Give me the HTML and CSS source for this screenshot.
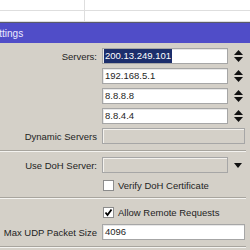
FILE: index.html
```html
<!DOCTYPE html>
<html lang="en">
<head>
  <meta charset="UTF-8">
  <title>DNS Settings</title>
  <link rel="stylesheet" href="styles.css">
</head>
<body>
  <div class="list">
    <div class="cell first"></div><div class="cell"></div>
    <div class="cell first"></div><div class="cell"></div>
  </div>

  <div class="titlebar"><span class="title">Settings</span></div>

  <main class="panel">
    <div class="row">
      <label class="label">Servers:</label>
      <div class="field"><span class="selected">200.13.249.101</span></div>
      <span class="icon"><svg width="9" height="12" viewBox="0 0 9 12"><polygon points="4.5,0 9,5 0,5"/><polygon points="0,7 9,7 4.5,12"/></svg></span>
    </div>
    <div class="row">
      <span class="label"></span>
      <div class="field">192.168.5.1</div>
      <span class="icon"><svg width="9" height="12" viewBox="0 0 9 12"><polygon points="4.5,0 9,5 0,5"/><polygon points="0,7 9,7 4.5,12"/></svg></span>
    </div>
    <div class="row">
      <span class="label"></span>
      <div class="field">8.8.8.8</div>
      <span class="icon"><svg width="9" height="12" viewBox="0 0 9 12"><polygon points="4.5,0 9,5 0,5"/><polygon points="0,7 9,7 4.5,12"/></svg></span>
    </div>
    <div class="row">
      <span class="label"></span>
      <div class="field">8.8.4.4</div>
      <span class="icon"><svg width="9" height="12" viewBox="0 0 9 12"><polygon points="4.5,0 9,5 0,5"/><polygon points="0,7 9,7 4.5,12"/></svg></span>
    </div>
    <div class="row">
      <span class="label">Dynamic Servers</span>
      <div class="field wide disabled"></div>
    </div>

    <hr class="sep">

    <div class="row">
      <span class="label">Use DoH Server:</span>
      <div class="field disabled"></div>
      <span class="icon"><svg width="8" height="5" viewBox="0 0 8 5"><polygon points="0,0 8,0 4,5"/></svg></span>
    </div>
    <div class="check-row">
      <span class="box"></span>
      <span>Verify DoH Certificate</span>
    </div>

    <hr class="sep">

    <div class="check-row">
      <span class="box"><svg width="9" height="9" viewBox="0 0 9 9"><polyline points="1.5,4.5 3.5,7 7.5,1.5" fill="none" stroke="#000" stroke-width="1.8"/></svg></span>
      <span>Allow Remote Requests</span>
    </div>
    <div class="row">
      <span class="label">Max UDP Packet Size</span>
      <div class="field wide">4096</div>
    </div>

    <hr class="sep">
  </main>
</body>
</html>
```

FILE: styles.css
```css
*, *::before, *::after {
  box-sizing: border-box;
}

body {
  margin: 0;
  width: 250px;
  height: 250px;
  overflow: hidden;
  background: #d4d0c8;
  font-family: "Liberation Sans", Arial, sans-serif;
  font-size: 9.5px;
  color: #1e1e1e;
}

/* window list behind the dialog */
.list {
  display: grid;
  grid-template-columns: 85px 1fr;
  grid-auto-rows: 11px;
  background: #fff;
}

.cell {
  border-bottom: 1px solid #dedede;
}

.cell.first {
  border-right: 1px solid #dedede;
}

.titlebar {
  height: 21px;
  border-top: 1px solid #5a5a6a;
  background: #504dc8;
  display: flex;
  align-items: center;
  overflow: hidden;
}

.title {
  margin-left: -13px;
  color: #eceaff;
  font-size: 10px;
}

.panel {
  padding-top: 5px;
  display: flex;
  flex-direction: column;
}

.row {
  display: flex;
  align-items: center;
  height: 16px;
  margin-bottom: 4px;
}

.check-row + .row {
  margin-top: 2px;
}

.label {
  width: 97px;
  margin-right: 5px;
  text-align: right;
  white-space: nowrap;
}

.field {
  width: 126px;
  height: 16px;
  background: #fff;
  border: 1px solid #a6a6a6;
  box-shadow: inset 1px 1px 0 #e8e8e8;
  padding: 0 2px;
  line-height: 14px;
  white-space: nowrap;
  overflow: hidden;
}

.field.wide {
  width: 143px;
}

.field.disabled {
  background: #d4d0c8;
  box-shadow: inset 1px 1px 0 #f4f2ee;
}

.selected {
  display: inline-block;
  background: #1c2e6c;
  color: #fff;
  padding: 0 1px;
  margin-left: -1px;
}

.icon {
  width: 20px;
  display: flex;
  justify-content: center;
  align-items: center;
}

.icon svg {
  fill: #111;
}

.sep {
  width: 246px;
  margin: 2px 0 5px 0;
  border: 0;
  border-top: 1px solid #a8a59e;
  border-bottom: 1px solid #f4f3f0;
}

.check-row {
  display: flex;
  align-items: center;
  gap: 4px;
  height: 17px;
  padding-left: 103px;
  margin-bottom: 1px;
}

.box {
  width: 11px;
  height: 11px;
  background: #fff;
  border: 1px solid #8c8c8c;
  display: flex;
  align-items: center;
  justify-content: center;
}
```
